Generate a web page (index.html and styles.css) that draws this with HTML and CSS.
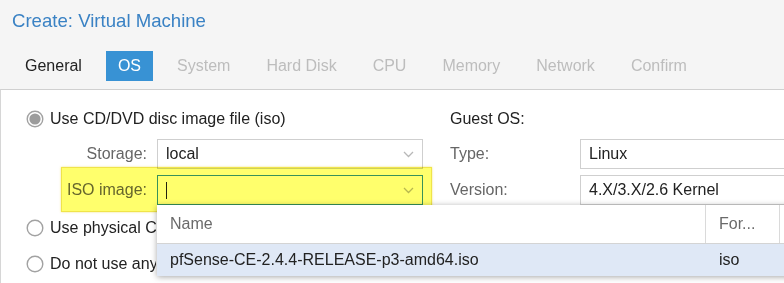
FILE: index.html
```html
<!DOCTYPE html>
<html>
<head>
<meta charset="utf-8">
<link rel="stylesheet" href="styles.css">
</head>
<body>
<div class="window">
  <div class="title">Create: Virtual Machine</div>
  <div class="tabs">
    <div class="tab">General</div>
    <div class="tab active">OS</div>
    <div class="tab disabled">System</div>
    <div class="tab disabled">Hard Disk</div>
    <div class="tab disabled">CPU</div>
    <div class="tab disabled">Memory</div>
    <div class="tab disabled">Network</div>
    <div class="tab disabled">Confirm</div>
  </div>
  <div class="panel">
    <div class="col-left">
      <div class="radio-row">
        <svg class="radio" width="18" height="18" viewBox="0 0 18 18"><circle cx="9" cy="9" r="7.8" fill="#fff" stroke="#a2a2a2" stroke-width="1.4"/><circle cx="9" cy="9" r="5.6" fill="#9c9c9c"/></svg>
        <span>Use CD/DVD disc image file (iso)</span>
      </div>
      <div class="field-row first">
        <label class="lbl">Storage:</label>
        <div class="combo"><span class="val">local</span>
          <svg class="chev" width="11" height="7" viewBox="0 0 11 7"><polyline points="1,1 5.5,5.5 10,1" fill="none" stroke="#b8b8b8" stroke-width="1.3"/></svg>
        </div>
      </div>
      <div class="field-row">
        <label class="lbl">ISO image:</label>
        <div class="combo focus"><span class="caret"></span><span class="val"></span>
          <svg class="chev" width="11" height="7" viewBox="0 0 11 7"><polyline points="1,1 5.5,5.5 10,1" fill="none" stroke="#b8b8b8" stroke-width="1.3"/></svg>
        </div>
      </div>
      <div class="radio-row r2">
        <svg class="radio" width="18" height="18" viewBox="0 0 18 18"><circle cx="9" cy="9" r="7.8" fill="#fff" stroke="#a2a2a2" stroke-width="1.4"/></svg>
        <span class="clip">Use physical CD/DVD Drive</span>
      </div>
      <div class="radio-row r3">
        <svg class="radio" width="18" height="18" viewBox="0 0 18 18"><circle cx="9" cy="9" r="7.8" fill="#fff" stroke="#a2a2a2" stroke-width="1.4"/></svg>
        <span class="clip">Do not use any media</span>
      </div>
    </div>
    <div class="col-right">
      <div class="section">Guest OS:</div>
      <div class="field-row first">
        <label class="lbl2">Type:</label>
        <div class="combo wide"><span class="val">Linux</span></div>
      </div>
      <div class="field-row">
        <label class="lbl2">Version:</label>
        <div class="combo wide"><span class="val">4.X/3.X/2.6 Kernel</span></div>
      </div>
    </div>
    <div class="highlight"></div>
    <div class="dropdown">
      <div class="dd-head">
        <div class="cell c-name">Name</div>
        <div class="cell c-fmt">For...</div>
        <div class="cell c-rest"></div>
      </div>
      <div class="dd-row">
        <div class="cell c-name">pfSense-CE-2.4.4-RELEASE-p3-amd64.iso</div>
        <div class="cell c-fmt">iso</div>
        <div class="cell c-rest"></div>
      </div>
    </div>
  </div>
</div>
</body>
</html>
```
FILE: styles.css
```css
html, body {
  margin: 0;
  padding: 0;
}
body {
  width: 784px;
  height: 283px;
  overflow: hidden;
  background: #f5f5f5;
  font-family: "Liberation Sans", Arial, sans-serif;
  font-size: 16px;
  color: #222;
}
.window {
  display: flex;
  flex-direction: column;
  width: 784px;
  height: 283px;
  overflow: hidden;
}
.title {
  padding: 10px 12px 0;
  font-size: 18.6px;
  line-height: 22px;
  color: #3a82c4;
  white-space: nowrap;
}
.tabs {
  display: flex;
  gap: 12px;
  margin-top: 19px;
  padding-left: 13px;
}
.tab {
  height: 30px;
  line-height: 30px;
  padding: 0 12px;
  color: #222;
  white-space: nowrap;
}
.tab.active {
  background: #3892d4;
  color: #fff;
}
.tab.disabled {
  color: #bdbdbd;
}
.panel {
  position: relative;
  flex: 1;
  margin-top: 8px;
  background: #fff;
  border-top: 1px solid #d0d0d0;
  border-left: 1px solid #d6d6d6;
  display: flex;
  padding: 17px 0 0 25px;
  box-sizing: border-box;
  overflow: hidden;
}
.col-left {
  width: 424px;
  flex: none;
}
.col-right {
  flex: 1;
  min-width: 0;
}
.radio-row {
  display: flex;
  align-items: center;
  gap: 6px;
  height: 24px;
  white-space: nowrap;
}
.radio { flex: none; }
.clip {
  display: block;
  width: 106px;
  overflow: hidden;
  white-space: nowrap;
}
.radio-row.r2 { margin-top: 11px; }
.radio-row.r3 { margin-top: 12px; }
.field-row {
  display: flex;
  align-items: center;
  margin-top: 6px;
}
.field-row.first { margin-top: 8px; }
.lbl {
  width: 121px;
  text-align: right;
  margin-right: 10px;
  color: #666;
  white-space: nowrap;
}
.lbl2 {
  width: 130px;
  flex: none;
  color: #666;
}
.section {
  height: 24px;
  line-height: 24px;
}
.combo {
  position: relative;
  width: 266px;
  height: 30px;
  box-sizing: border-box;
  border: 1px solid #cfcfcf;
  display: flex;
  align-items: center;
  padding-left: 8px;
  background: #fff;
  flex: none;
}
.combo.wide { width: 320px; }
.combo.focus { border-color: #3892d4; }
.caret {
  width: 1px;
  height: 17px;
  background: #222;
}
.chev {
  margin-left: auto;
  margin-right: 8px;
}
.highlight {
  position: absolute;
  left: 60px;
  top: 77px;
  width: 371px;
  height: 45px;
  box-sizing: border-box;
  background: #ffff6c;
  border: 1px solid #f0e44a;
  box-shadow: 0 0 2px rgba(230, 210, 40, 0.6);
  mix-blend-mode: multiply;
  pointer-events: none;
}
.dropdown {
  position: absolute;
  left: 156px;
  top: 115px;
  width: 660px;
  background: #fff;
  box-shadow: 0 1px 6px rgba(0, 0, 0, 0.35);
}
.dd-head, .dd-row {
  display: flex;
}
.dd-head {
  height: 38px;
  border-bottom: 1px solid #d4d4d4;
  color: #6a6a6a;
}
.dd-row {
  height: 32px;
  background: #dfe8f6;
}
.cell {
  display: flex;
  align-items: center;
  padding-left: 13px;
  box-sizing: border-box;
  white-space: nowrap;
  flex: none;
}
.c-name { width: 549px; }
.c-fmt { width: 74px; }
.dd-head .c-name, .dd-head .c-fmt { border-right: 1px solid #dadada; }
.c-rest { flex: 1; }
```
